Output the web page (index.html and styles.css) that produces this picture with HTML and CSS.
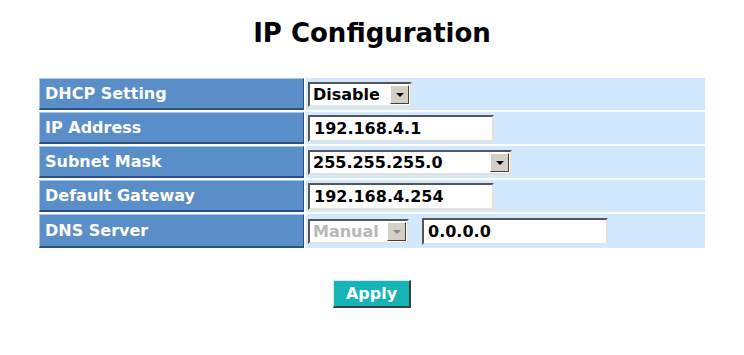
FILE: index.html
```html
<!DOCTYPE html>
<html>
    <head>
        <title>IP Configuration</title>
        <link rel="stylesheet" href="styles.css">
    </head>
    <body>
        <h1 class="pageTitle">IP Configuration</h1>
        <form class="ipForm">
            <table class="cfgTable">
                <tr>
                    <td class="cfgLabel">DHCP Setting</td>
                    <td class="cfgValue">
                        <span class="selBox selDhcp">
                            <select class="selInput">
                                <option>Disable</option>
                                <option>Enable</option>
                            </select>
                            <span class="selArrow"></span>
                        </span>
                    </td>
                </tr>
                <tr>
                    <td class="cfgLabel">IP Address</td>
                    <td class="cfgValue"><input type="text" class="txtInput" value="192.168.4.1"></td>
                </tr>
                <tr>
                    <td class="cfgLabel">Subnet Mask</td>
                    <td class="cfgValue">
                        <span class="selBox selMask">
                            <select class="selInput">
                                <option>255.255.255.0</option>
                            </select>
                            <span class="selArrow"></span>
                        </span>
                    </td>
                </tr>
                <tr>
                    <td class="cfgLabel">Default Gateway</td>
                    <td class="cfgValue"><input type="text" class="txtInput" value="192.168.4.254"></td>
                </tr>
                <tr class="dnsRow">
                    <td class="cfgLabel">DNS Server</td>
                    <td class="cfgValue">
                        <div class="dnsWrap">
                            <span class="selBox selDns disabled">
                                <select class="selInput" disabled>
                                    <option>Manual</option>
                                </select>
                                <span class="selArrow"></span>
                            </span>
                            <input type="text" class="txtInput" value="0.0.0.0">
                        </div>
                    </td>
                </tr>
            </table>
            <div class="btnRow">
                <button type="button" class="applyBtn">Apply</button>
            </div>
        </form>
    </body>
</html>
```

FILE: styles.css
```css
body{
    margin: 0;
    padding: 0;
    background-color: #ffffff;
    font-family: "DejaVu Sans", Verdana, sans-serif;
}

.pageTitle{
    margin: 0;
    padding-top: 18px;
    height: 76px;
    box-sizing: border-box;
    text-align: center;
    font-size: 26px;
    font-weight: bold;
    color: #000000;
}

.ipForm{
    margin: 0;
}

.cfgTable{
    width: 670px;
    margin: 0 auto;
    border-spacing: 2px;
    border-collapse: separate;
}

.cfgTable tr{
    height: 32px;
}

.cfgTable .dnsRow{
    height: 34px;
}

.cfgLabel{
    width: 258px;
    padding: 0 0 0 5px;
    background-color: #5a8ec8;
    color: #ffffff;
    font-size: 16px;
    font-weight: bold;
    border-style: solid;
    border-width: 1px 1px 2px 1px;
    border-color: #a9c8ea #2c5080 #2c5080 #a9c8ea;
}

.cfgValue{
    padding: 0 0 0 2px;
    background-color: #d2e8fe;
}

.txtInput{
    width: 186px;
    height: 27px;
    box-sizing: border-box;
    padding: 0 4px;
    font-family: "DejaVu Sans", Verdana, sans-serif;
    font-size: 16px;
    font-weight: bold;
    color: #000000;
    background-color: #ffffff;
    border-style: solid;
    border-width: 2px;
    border-color: #555555 #e4e2dc #e4e2dc #555555;
    outline: none;
}

.selBox{
    display: inline-flex;
    align-items: center;
    height: 25px;
    box-sizing: border-box;
    background-color: #ffffff;
    border-style: solid;
    border-width: 2px;
    border-color: #555555 #e4e2dc #e4e2dc #555555;
    vertical-align: middle;
}

.selInput{
    appearance: none;
    -webkit-appearance: none;
    border: none;
    background: transparent;
    padding: 0 0 0 3px;
    flex: 1;
    min-width: 0;
    height: 100%;
    font-family: "DejaVu Sans", Verdana, sans-serif;
    font-size: 16px;
    font-weight: bold;
    color: #000000;
    outline: none;
}

.selArrow{
    width: 19px;
    height: 19px;
    margin-right: 1px;
    box-sizing: border-box;
    background-color: #d4d0c8;
    border-style: solid;
    border-width: 1px;
    border-color: #ffffff #404040 #404040 #ffffff;
    display: flex;
    align-items: center;
    justify-content: center;
}

.selArrow::after{
    content: "";
    border-left: 4px solid transparent;
    border-right: 4px solid transparent;
    border-top: 4px solid #000000;
    margin-top: 1px;
}

.selDhcp{
    width: 104px;
}

.selMask{
    width: 204px;
}

.selDns{
    width: 101px;
}

.disabled .selInput{
    color: #9a9a9a;
}

.disabled .selArrow::after{
    border-top-color: #8a8a8a;
}

.dnsWrap{
    display: flex;
    align-items: center;
    gap: 13px;
}

.btnRow{
    display: flex;
    justify-content: center;
    padding-top: 30px;
}

.applyBtn{
    width: 78px;
    height: 28px;
    padding: 0;
    background-color: #16b4b4;
    color: #ffffff;
    font-family: "DejaVu Sans", Verdana, sans-serif;
    font-size: 16px;
    font-weight: bold;
    border-style: solid;
    border-width: 1px 2px 2px 1px;
    border-color: #d0f0f0 #404040 #404040 #d0f0f0;
}
```
